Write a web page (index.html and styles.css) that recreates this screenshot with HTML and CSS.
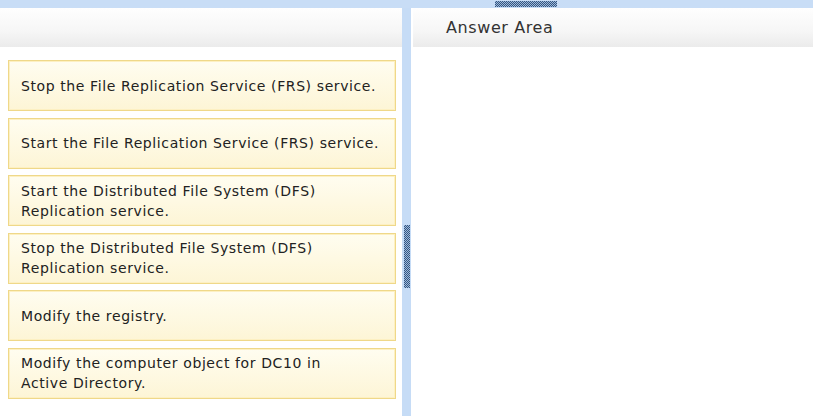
FILE: index.html
```html
<!DOCTYPE html>
<html lang="en">
  <head>
    <meta charset="UTF-8" />
    <title>Answer Area</title>
    <link rel="stylesheet" href="styles.css">
  </head>
  <body>
    <div class="top-bar">
      <div class="top-grip"></div>
    </div>
    <div class="main">
      <div class="choices">
        <div class="panel-header"></div>
        <div class="choice-list">
          <div class="choice">Stop the File Replication Service (FRS) service.</div>
          <div class="choice">Start the File Replication Service (FRS) service.</div>
          <div class="choice">Start the Distributed File System (DFS)<br>Replication service.</div>
          <div class="choice">Stop the Distributed File System (DFS)<br>Replication service.</div>
          <div class="choice">Modify the registry.</div>
          <div class="choice">Modify the computer object for DC10 in<br>Active Directory.</div>
        </div>
      </div>
      <div class="divider">
        <div class="side-grip"></div>
      </div>
      <div class="answers">
        <div class="panel-header answer-header">Answer Area</div>
      </div>
    </div>
  </body>
</html>
```

FILE: styles.css
```css
html, body {
  margin: 0;
  padding: 0;
}
body {
  width: 813px;
  height: 416px;
  overflow: hidden;
  background: #fff;
  font-family: "DejaVu Sans", Verdana, sans-serif;
  color: #222;
}
.top-bar {
  height: 8px;
  background: #c8ddf6;
  display: flex;
}
.top-grip {
  margin-left: 495px;
  width: 62px;
  height: 6px;
  margin-top: 1px;
  background-image: repeating-conic-gradient(#35567f 0 25%, #9db9dc 0 50%);
  background-size: 2px 2px;
}
.main {
  display: flex;
  height: 408px;
}
.choices {
  width: 402px;
}
.panel-header {
  height: 39px;
  background: linear-gradient(#fefefe, #f6f6f6 60%, #ebebeb);
}
.choice-list {
  display: flex;
  flex-direction: column;
  gap: 6.6px;
  padding: 13px 0 0 8px;
}
.choice {
  box-sizing: border-box;
  width: 388px;
  height: 51px;
  border: 1px solid #efd889;
  box-shadow: inset 0 0 0 1px #fdf0c2;
  background: linear-gradient(#fffdf0, #fdf5d6);
  padding: 0 0 0 12px;
  display: flex;
  align-items: center;
  font-size: 14px;
  letter-spacing: 0.6px;
  line-height: 20px;
}
.divider {
  width: 9px;
  background: #c6dcf6;
  display: flex;
  align-items: flex-start;
}
.side-grip {
  margin: 217px 0 0 2px;
  width: 6px;
  height: 63px;
  background-image: repeating-conic-gradient(#35567f 0 25%, #9db9dc 0 50%);
  background-size: 2px 2px;
}
.answers {
  flex: 1;
  padding-left: 2px;
}
.answer-header {
  padding-left: 33px;
  font-size: 16px;
  letter-spacing: 0.6px;
  line-height: 40px;
  color: #333;
}
```
